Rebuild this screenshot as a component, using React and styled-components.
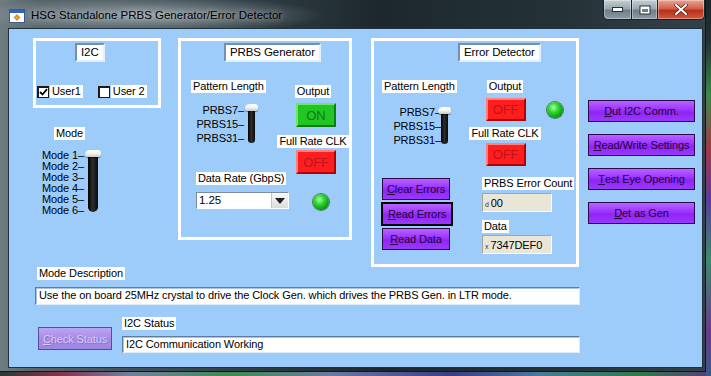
import React from "react";
import styled, { createGlobalStyle, css } from "styled-components";

const GlobalStyle = createGlobalStyle`
  html, body {
    margin: 0;
    padding: 0;
    width: 711px;
    height: 376px;
    overflow: hidden;
  }
  body {
    font-family: "Liberation Sans", Arial, sans-serif;
    font-size: 11px;
    letter-spacing: -0.1px;
    color: #000;
  }
`;

const Desktop = styled.div`
  width: 711px;
  height: 376px;
  background:
    linear-gradient(180deg, #1b272c 0px, #22302f 40px, #3c8a4c 95px, #a03848 150px, #5b3c9c 200px, #3c8c6c 260px, #6a3a8c 330px, #3a5a8a 376px) right top / 5px 100% no-repeat,
    linear-gradient(90deg, #2a3a30 0px, #8a3048 60px, #7080a0 130px, #3f8a52 230px, #6a7aa0 330px, #3b3c8a 450px, #4a7a9a 540px, #2f7a4a 640px, #5a3a7a 711px);
`;

const Frame = styled.div`
  width: 706px;
  height: 372px;
  box-sizing: border-box;
  display: flex;
  flex-direction: column;
  border-right: 1px solid #0f191d;
  border-bottom: 1px solid #0f191d;
  background: linear-gradient(90deg, #6f7d82 0px, #55646a 40px, #34434a 220px, #1c282d 380px, #243238 560px, #33424a 706px);
`;

const TitleBar = styled.div`
  height: 28px;
  display: flex;
  align-items: flex-start;
  background: radial-gradient(ellipse 175px 19px at 150px 15px, rgba(196, 205, 210, 0.6), rgba(196, 205, 210, 0) 100%);
`;

const AppIcon = styled.svg`
  width: 16px;
  height: 16px;
  margin: 8px 0 0 9px;
  flex: none;
`;

const Title = styled.div`
  margin: 9px 0 0 6px;
  font-size: 11.5px;
  letter-spacing: 0;
  line-height: 13px;
  white-space: nowrap;
  color: #000;
  text-shadow: 0 0 6px rgba(255, 255, 255, 0.75);
`;

const Controls = styled.div`
  display: flex;
  margin-left: auto;
`;

const CtlButton = styled.div`
  width: ${(p) => p.$w}px;
  height: 20px;
  box-sizing: border-box;
  display: flex;
  align-items: center;
  justify-content: center;
  border: 1px solid #1b2226;
  border-top: none;
  border-left-width: ${(p) => (p.$first ? 1 : 0)}px;
  border-radius: ${(p) => (p.$first ? "0 0 0 5px" : p.$last ? "0 0 5px 0" : "0")};
  background: ${(p) =>
    p.$close
      ? "linear-gradient(180deg, #e8a494 0%, #d2604c 45%, #b8301c 55%, #d05a40 100%)"
      : "linear-gradient(180deg, #c5ced4 0%, #9aa8b1 45%, #6e7f8a 55%, #8c9ba4 100%)"};
  box-shadow: inset 0 0 0 1px rgba(255, 255, 255, 0.35);
`;

const Body = styled.div`
  margin-left: 8px;
  width: 695px;
  height: 340px;
  box-sizing: border-box;
  border: 1px solid #22323c;
  background: #9dccfb;
`;

const Panel = styled.div`
  display: grid;
  grid-template-columns: 145px 193px 217px 107px;
  grid-template-rows: 203px 40px auto auto;
  grid-template-areas:
    "left gen det side"
    "desc desc det side"
    "descf descf descf ."
    "stat stat stat .";
  padding: 9px 0 0 24px;
`;

const Area = styled.div`
  grid-area: ${(p) => p.$area};
  display: flex;
  flex-direction: ${(p) => p.$dir || "column"};
  align-items: flex-start;
  align-self: ${(p) => p.$self || "start"};
  padding-top: ${(p) => p.$pt || 0}px;
  gap: ${(p) => p.$gap || 0}px;
`;

const Group = styled.div`
  box-sizing: border-box;
  width: ${(p) => p.$w}px;
  height: ${(p) => p.$h}px;
  border: 3px solid #fff;
  display: flex;
  flex-direction: column;
  align-items: flex-start;
`;

const Caption = styled.div`
  margin: 2px 0 0 ${(p) => p.$left}px;
  height: 19px;
  box-sizing: border-box;
  padding: 0 4px;
  line-height: 15px;
  font-size: 11.5px;
  background: #fff;
  border: 2px solid;
  border-color: #6f90b8 #e4f0fc #e4f0fc #6f90b8;
`;

const Tag = styled.div`
  background: #fff;
  padding: 0 2px;
  line-height: 13px;
  white-space: nowrap;
  margin-top: ${(p) => p.$mt || 0}px;
  margin-left: ${(p) => p.$ml || 0}px;
  margin-bottom: ${(p) => p.$mb || 0}px;
`;

const Cols = styled.div`
  display: flex;
  align-items: flex-start;
`;

const Col = styled.div`
  width: ${(p) => p.$w}px;
  box-sizing: border-box;
  padding-left: ${(p) => p.$pl || 0}px;
  display: flex;
  flex-direction: column;
  align-items: ${(p) => p.$align || "flex-start"};
`;

const CheckRow = styled.div`
  display: flex;
  align-items: center;
  margin: 23px 0 0 1px;
`;

const CheckBox = styled.span`
  width: 12px;
  height: 12px;
  box-sizing: border-box;
  background: #fff;
  border-style: solid;
  border-color: #1a1a1a;
  border-width: 2px 1px 1px 2px;
  display: inline-flex;
  align-items: center;
  justify-content: center;
  margin-left: ${(p) => p.$ml || 0}px;
  margin-right: 1px;
`;

const SliderWrap = styled.div`
  display: flex;
  align-items: flex-start;
  margin-top: ${(p) => p.$mt}px;
  margin-left: ${(p) => p.$ml || 0}px;
`;

const Scale = styled.div`
  width: ${(p) => p.$w}px;
  text-align: right;
  line-height: ${(p) => p.$row}px;
  white-space: nowrap;
`;

const Track = styled.div`
  position: relative;
  width: ${(p) => p.$w}px;
  height: ${(p) => p.$h}px;
  margin: ${(p) => p.$mt}px 0 0 ${(p) => p.$gap}px;
  border-radius: ${(p) => p.$w / 2}px;
  background: linear-gradient(90deg, #000 0%, #2e2e2e 45%, #0a0a0a 100%);
`;

const Thumb = styled.div`
  position: absolute;
  left: -3px;
  right: -3px;
  top: -1px;
  height: 7px;
  border-radius: 6px 4px 3px 3px;
  background: linear-gradient(180deg, #ffffff 0%, #f2f2f2 50%, #c8c8c8 100%);
  box-shadow: 0 1px 1px rgba(0, 0, 0, 0.45);
`;

const Toggle = styled.div`
  width: 40px;
  height: ${(p) => p.$h || 24}px;
  box-sizing: border-box;
  margin-top: ${(p) => p.$mt || 0}px;
  margin-left: ${(p) => p.$ml || 0}px;
  display: flex;
  align-items: center;
  justify-content: center;
  font-size: 13px;
  border: 2px solid;
  ${(p) =>
    p.$on
      ? css`
          background: #22c622;
          color: #0c7a18;
          border-color: #6ee66e #0f7d0f #0f7d0f #6ee66e;
        `
      : css`
          background: #ff1e1e;
          color: #c2121c;
          border-color: #ff8080 #b40000 #b40000 #ff8080;
        `}
`;

const Led = styled.div`
  width: 16px;
  height: 16px;
  flex: none;
  border-radius: 50%;
  margin-top: ${(p) => p.$mt || 0}px;
  margin-left: ${(p) => p.$ml || 0}px;
  background: radial-gradient(circle at 40% 35%, #a8ffa8 0%, #2ed62e 35%, #0a9a10 70%, #0c6a0c 100%);
  box-shadow: 0 0 0 1px #4f7c5a;
`;

const Ring = styled.div`
  width: 93px;
  height: 17px;
  margin-top: 7px;
  margin-left: 5px;
  box-sizing: border-box;
  display: flex;
  background: #fff;
  border: 1px solid;
  border-color: #7b8c9e #ffffff #ffffff #7b8c9e;
`;

const RingText = styled.div`
  flex: 1;
  padding-left: 2px;
  line-height: 15px;
  font-size: 11.5px;
`;

const RingArrow = styled.div`
  width: 16px;
  display: flex;
  align-items: center;
  justify-content: center;
  background: linear-gradient(180deg, #fafafa, #dcdcdc);
  border-left: 1px solid #c4c4c4;

  &::after {
    content: "";
    border-left: 5px solid transparent;
    border-right: 5px solid transparent;
    border-top: 6px solid #222;
  }
`;

const CmdButton = styled.div`
  width: ${(p) => p.$w}px;
  height: ${(p) => p.$h || 22}px;
  box-sizing: border-box;
  margin-top: ${(p) => p.$mt || 0}px;
  margin-left: ${(p) => p.$ml || 0}px;
  display: flex;
  align-items: center;
  justify-content: center;
  white-space: nowrap;
  font-size: 11px;
  color: #1c0436;
  border: 1px solid #2a0a48;
  background: linear-gradient(180deg, #b663ff 0%, #9c33ff 45%, #9024f6 55%, #9b38ff 100%);
  ${(p) =>
    p.$focus &&
    css`
      border-color: #000;
      box-shadow: 0 0 0 1px #000;
    `}
  ${(p) =>
    p.$disabled &&
    css`
      color: #d6caf6;
      text-shadow: 1px 1px 0 #8a72c6;
      border-color: #5c4c92;
      background: linear-gradient(180deg, #bba6f2 0%, #a78ce8 50%, #a185e4 100%);
    `}
`;

const NumField = styled.div`
  width: 70px;
  height: 19px;
  box-sizing: border-box;
  margin-top: ${(p) => p.$mt || 0}px;
  display: flex;
  align-items: center;
  padding-left: 2px;
  background: #e9e6d8;
  border: 1px solid;
  border-color: #a4a4a0 #fbfbf6 #fbfbf6 #a4a4a0;
  font-size: 11px;
`;

const Radix = styled.span`
  font-size: 7px;
  color: #333;
  margin: 4px 2px 0 0;
`;

const TextField = styled.div`
  width: ${(p) => p.$w}px;
  height: ${(p) => p.$h}px;
  box-sizing: border-box;
  margin-top: ${(p) => p.$mt || 0}px;
  margin-left: ${(p) => p.$ml || 0}px;
  padding-left: 3px;
  line-height: ${(p) => p.$h - 3}px;
  background: #fff;
  border: 1px solid;
  border-color: #5a7ca6 #dcecfc #dcecfc #5a7ca6;
  box-shadow: inset 1px 1px 0 #a9c3e0;
  white-space: nowrap;
  overflow: hidden;
`;

const StatusCol = styled.div`
  display: flex;
  flex-direction: column;
  align-items: flex-start;
  margin-left: 10px;
`;

function Slider({ labels, mt, ml, scaleW, row, gap, trackW, trackH, trackTop }) {
  return (
    <SliderWrap $mt={mt} $ml={ml}>
      <Scale $w={scaleW} $row={row}>
        {labels.map((l) => (
          <div key={l}>{l}–</div>
        ))}
      </Scale>
      <Track $w={trackW} $h={trackH} $mt={trackTop} $gap={gap}>
        <Thumb />
      </Track>
    </SliderWrap>
  );
}

function Cmd({ label, ...rest }) {
  return (
    <CmdButton {...rest}>
      <u>{label[0]}</u>
      {label.slice(1)}
    </CmdButton>
  );
}

const prbs = ["PRBS7", "PRBS15", "PRBS31"];
const modes = ["Mode 1", "Mode 2", "Mode 3", "Mode 4", "Mode 5", "Mode 6"];

export default function App() {
  return (
    <Desktop>
      <GlobalStyle />
      <Frame>
        <TitleBar>
          <AppIcon viewBox="0 0 16 16">
            <rect x="0.5" y="1.5" width="15" height="13" fill="#fff" stroke="#3a5a8a" />
            <rect x="1" y="2" width="14" height="3" fill="#3464b4" />
            <path d="M8 6.5 L11 9.5 L8 12.5 L5 9.5 Z" fill="#e8a020" stroke="#a86010" strokeWidth="0.6" />
          </AppIcon>
          <Title>HSG Standalone PRBS Generator/Error Detector</Title>
          <Controls>
            <CtlButton $w={29} $first>
              <svg width="11" height="5" viewBox="0 0 11 5">
                <rect x="0.5" y="0.5" width="10" height="4" fill="#fff" stroke="#2a3238" />
              </svg>
            </CtlButton>
            <CtlButton $w={26}>
              <svg width="12" height="10" viewBox="0 0 12 10">
                <rect x="0.5" y="0.5" width="11" height="9" fill="#2a3238" />
                <rect x="1.5" y="1.5" width="9" height="7" fill="#fff" />
                <rect x="3" y="4" width="6" height="3" fill="#6e7f8a" />
              </svg>
            </CtlButton>
            <CtlButton $w={47} $last $close>
              <svg width="14" height="11" viewBox="0 0 14 11">
                <path d="M2 1 L12 10 M12 1 L2 10" stroke="#5a1a10" strokeWidth="3.4" strokeLinecap="round" />
                <path d="M2 1 L12 10 M12 1 L2 10" stroke="#fff" strokeWidth="2" strokeLinecap="round" />
              </svg>
            </CtlButton>
          </Controls>
        </TitleBar>

        <Body>
          <Panel>
            <Area $area="left">
              <Group $w={128} $h={70}>
                <Caption $left={39}>I2C</Caption>
                <CheckRow>
                  <CheckBox>
                    <svg width="9" height="8" viewBox="0 0 9 8">
                      <path d="M1 4 L3.5 6.5 L8 1.2" fill="none" stroke="#000" strokeWidth="1.8" />
                    </svg>
                  </CheckBox>
                  <Tag>User1</Tag>
                  <CheckBox $ml={15} />
                  <Tag>User 2</Tag>
                </CheckRow>
              </Group>
              <Tag $mt={19} $ml={21}>Mode</Tag>
              <Slider
                labels={modes}
                mt={10}
                ml={6}
                scaleW={45}
                row={11}
                gap={4}
                trackW={10}
                trackH={61}
                trackTop={1}
              />
            </Area>

            <Area $area="gen">
              <Group $w={174} $h={202}>
                <Caption $left={43}>PRBS Generator</Caption>
                <Cols>
                  <Col $w={98} $pl={10}>
                    <Tag $mt={18}>Pattern Length</Tag>
                    <Slider
                      labels={prbs}
                      mt={10}
                      scaleW={53}
                      row={14}
                      gap={4}
                      trackW={7}
                      trackH={38}
                      trackTop={2}
                    />
                    <Tag $mt={27} $ml={5}>Data Rate (GbpS)</Tag>
                    <Ring>
                      <RingText>1.25</RingText>
                      <RingArrow />
                    </Ring>
                  </Col>
                  <Col $w={68} $align="center">
                    <Tag $mt={23}>Output</Tag>
                    <Toggle $on $mt={5} $ml={6}>ON</Toggle>
                    <Tag $mt={8}>Full Rate CLK</Tag>
                    <Toggle $mt={2} $ml={6}>OFF</Toggle>
                    <Led $mt={20} $ml={16} />
                  </Col>
                </Cols>
              </Group>
            </Area>

            <Area $area="det">
              <Group $w={208} $h={229}>
                <Caption $left={84}>Error Detector</Caption>
                <Cols>
                  <Col $w={97} $pl={8}>
                    <Tag $mt={18}>Pattern Length</Tag>
                    <Slider
                      labels={prbs}
                      mt={12}
                      ml={4}
                      scaleW={55}
                      row={14}
                      gap={0}
                      trackW={7}
                      trackH={36}
                      trackTop={3}
                    />
                    <Cmd label="Clear Errors" $w={68} $mt={31} />
                    <Cmd label="Read Errors" $w={70} $mt={3} $focus />
                    <Cmd label="Read Data" $w={68} $mt={3} />
                  </Col>
                  <Col $w={105}>
                    <Cols>
                      <Col $w={68} $align="center">
                        <Tag $mt={18}>Output</Tag>
                        <Toggle $h={23} $mt={5} $ml={1}>OFF</Toggle>
                        <Tag $mt={6}>Full Rate CLK</Tag>
                        <Toggle $h={23} $mt={3} $ml={1}>OFF</Toggle>
                      </Col>
                      <Led $mt={40} $ml={8} />
                    </Cols>
                    <Col $w={105} $pl={11}>
                      <Tag $mt={11}>PRBS Error Count</Tag>
                      <NumField $mt={3}>
                        <Radix>d</Radix>00
                      </NumField>
                      <Tag $mt={8}>Data</Tag>
                      <NumField $mt={2}>
                        <Radix>x</Radix>7347DEF0
                      </NumField>
                    </Col>
                  </Col>
                </Cols>
              </Group>
            </Area>

            <Area $area="side" $pt={62} $gap={12}>
              <Cmd label="Dut I2C Comm." $w={107} />
              <Cmd label="Read/Write Settings" $w={107} />
              <Cmd label="Test Eye Opening" $w={107} />
              <Cmd label="Det as Gen" $w={107} />
            </Area>

            <Area $area="desc" $self="end">
              <Tag $ml={4} $mb={1}>Mode Description</Tag>
            </Area>

            <Area $area="descf">
              <TextField $w={545} $h={18} $mt={6} $ml={2}>
                Use the on board 25MHz crystal to drive the Clock Gen. which drives the PRBS Gen. in LTR mode.
              </TextField>
            </Area>

            <Area $area="stat" $dir="row">
              <Cmd label="Check Status" $w={74} $h={23} $mt={22} $ml={5} $disabled />
              <StatusCol>
                <Tag $mt={12}>I2C Status</Tag>
                <TextField $w={458} $h={17} $mt={6}>
                  I2C Communication Working
                </TextField>
              </StatusCol>
            </Area>
          </Panel>
        </Body>
      </Frame>
    </Desktop>
  );
}
